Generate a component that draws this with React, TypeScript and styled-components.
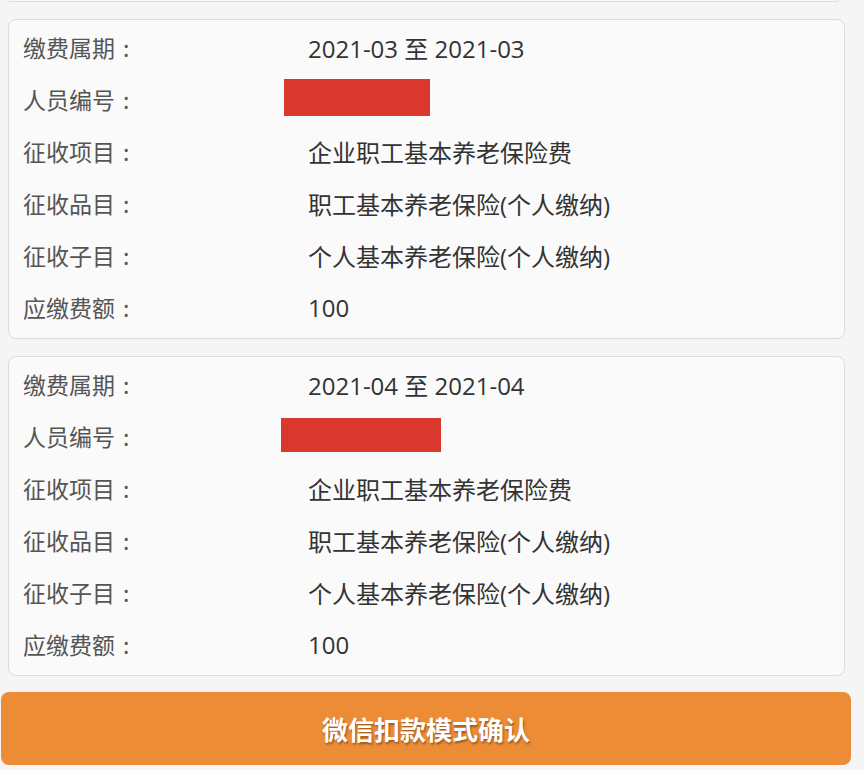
import {FunctionComponent, ReactNode} from 'react'
import styled, {createGlobalStyle} from 'styled-components'

const GlobalStyle = createGlobalStyle`
    html, body {
        margin: 0;
        padding: 0;
        background: #f5f5f5;
    }

    body {
        font-family: "Open Sans", "Noto Sans CJK SC", sans-serif;
    }
`

const Page = styled.div`
    width: 864px;
    height: 770px;
    overflow: hidden;
    display: flex;
    flex-direction: column;
    padding: 0 0 0 1px;
    box-sizing: border-box;
`

const PrevCardEdge = styled.div`
    margin: 0 26px 0 7px;
    height: 1px;
    border: 1px solid #dcdcdc;
    border-top: none;
    border-radius: 0 0 8px 8px;
    background: #fafafa;
`

const Card = styled.div`
    margin: 17px 19px 0 7px;
    padding: 1px 14px 5px;
    border: 1px solid #dcdcdc;
    border-radius: 8px;
    background: #fafafa;
    display: flex;
    flex-direction: column;
`

const Row = styled.div`
    height: 52px;
    display: flex;
    align-items: center;
    font-size: 24px;
`

const Label = styled.span`
    width: 285px;
    flex: none;
    color: #555;
    font-family: "Noto Sans CJK SC", sans-serif;
    font-size: 23px;
`

const Colon = styled.span`
    margin-left: 8px;
`

const Value = styled.span`
    color: #333;
`

const Redact = styled.span<{ $w: number, $h: number, $dx: number, $up: number }>`
    display: block;
    width: ${p => p.$w}px;
    height: ${p => p.$h}px;
    margin-left: ${p => p.$dx}px;
    margin-bottom: ${p => p.$up * 2}px;
    background: #da382f;
`

const ConfirmButton = styled.button`
    margin: 16px 13px 0 0;
    height: 73px;
    border: none;
    border-radius: 8px;
    background: #ec8c36;
    color: #fff;
    font-family: "Noto Sans CJK SC", sans-serif;
    font-size: 26px;
    font-weight: 700;
    text-shadow: 1px 2px 2px rgba(90, 40, 0, 0.5);
    cursor: pointer;
`

interface Bill {
    period: string
    redact: { w: number, h: number, dx: number, up: number }
    item: string
    category: string
    sub: string
    amount: string
}

const bills: Bill[] = [
    {
        period: '2021-03 至 2021-03',
        redact: {w: 146, h: 37, dx: -24, up: 2},
        item: '企业职工基本养老保险费',
        category: '职工基本养老保险(个人缴纳)',
        sub: '个人基本养老保险(个人缴纳)',
        amount: '100',
    },
    {
        period: '2021-04 至 2021-04',
        redact: {w: 160, h: 34, dx: -27, up: 1.5},
        item: '企业职工基本养老保险费',
        category: '职工基本养老保险(个人缴纳)',
        sub: '个人基本养老保险(个人缴纳)',
        amount: '100',
    },
]

const Field: FunctionComponent<{ label: string, children: ReactNode }> = ({label, children}) => (
    <Row>
        <Label>{label}<Colon>:</Colon></Label>
        {children}
    </Row>
)

const BillCard: FunctionComponent<{ bill: Bill }> = ({bill}) => (
    <Card>
        <Field label="缴费属期"><Value>{bill.period}</Value></Field>
        <Field label="人员编号">
            <Redact $w={bill.redact.w} $h={bill.redact.h} $dx={bill.redact.dx} $up={bill.redact.up}/>
        </Field>
        <Field label="征收项目"><Value>{bill.item}</Value></Field>
        <Field label="征收品目"><Value>{bill.category}</Value></Field>
        <Field label="征收子目"><Value>{bill.sub}</Value></Field>
        <Field label="应缴费额"><Value>{bill.amount}</Value></Field>
    </Card>
)

const App: FunctionComponent = () => (
    <>
        <GlobalStyle/>
        <Page>
            <PrevCardEdge/>
            {bills.map(b => <BillCard key={b.period} bill={b}/>)}
            <ConfirmButton>微信扣款模式确认</ConfirmButton>
        </Page>
    </>
)

export default App
